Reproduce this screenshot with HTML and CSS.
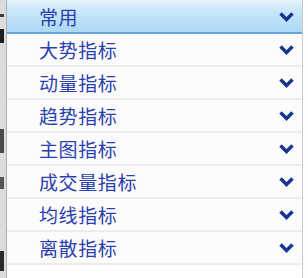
FILE: index.html
```html
<!DOCTYPE html>
<html lang="zh-CN">
<head>
    <meta charset="UTF-8">
    <title>指标菜单</title>
    <link rel="stylesheet" href="styles.css">
</head>
<body>
    <div class="screen">
        <div class="side-strip">
            <div class="mark mark-a"></div>
            <div class="mark mark-b"></div>
            <div class="mark mark-c"></div>
            <div class="mark mark-d"></div>
            <div class="mark mark-e"></div>
        </div>

        <div class="menu">
            <div class="menu-row menu-head">
                <span class="label">常用</span>
                <svg class="chev" width="15" height="11" viewBox="0 0 15 11"><path d="M1.5 2.5 L7.5 8.5 L13.5 2.5" /></svg>
            </div>
            <div class="menu-row">
                <span class="label">大势指标</span>
                <svg class="chev" width="15" height="11" viewBox="0 0 15 11"><path d="M1.5 2.5 L7.5 8.5 L13.5 2.5" /></svg>
            </div>
            <div class="menu-row">
                <span class="label">动量指标</span>
                <svg class="chev" width="15" height="11" viewBox="0 0 15 11"><path d="M1.5 2.5 L7.5 8.5 L13.5 2.5" /></svg>
            </div>
            <div class="menu-row">
                <span class="label">趋势指标</span>
                <svg class="chev" width="15" height="11" viewBox="0 0 15 11"><path d="M1.5 2.5 L7.5 8.5 L13.5 2.5" /></svg>
            </div>
            <div class="menu-row">
                <span class="label">主图指标</span>
                <svg class="chev" width="15" height="11" viewBox="0 0 15 11"><path d="M1.5 2.5 L7.5 8.5 L13.5 2.5" /></svg>
            </div>
            <div class="menu-row">
                <span class="label">成交量指标</span>
                <svg class="chev" width="15" height="11" viewBox="0 0 15 11"><path d="M1.5 2.5 L7.5 8.5 L13.5 2.5" /></svg>
            </div>
            <div class="menu-row">
                <span class="label">均线指标</span>
                <svg class="chev" width="15" height="11" viewBox="0 0 15 11"><path d="M1.5 2.5 L7.5 8.5 L13.5 2.5" /></svg>
            </div>
            <div class="menu-row">
                <span class="label">离散指标</span>
                <svg class="chev" width="15" height="11" viewBox="0 0 15 11"><path d="M1.5 2.5 L7.5 8.5 L13.5 2.5" /></svg>
            </div>
        </div>

        <div class="right-gap"></div>
    </div>
</body>
</html>
```

FILE: styles.css
```css
body {
    margin: 0;
    background-color: #ffffff;
    font-family: "Noto Sans CJK SC", "Microsoft YaHei", sans-serif;
}

.screen {
    display: flex;
    width: 308px;
    height: 278px;
    overflow: hidden;
}

/* window behind the menu, only a sliver shows */
.side-strip {
    width: 6px;
    flex-shrink: 0;
    background-color: #dcdcdc;
    border-right: 1px solid #b0b0b0;
    display: flex;
    flex-direction: column;
}

.mark {
    width: 4px;
    background-color: #3a3a3a;
}

.mark-a { height: 3px; margin-top: 14px; }
.mark-b { height: 14px; margin-top: 12px; background-color: #1e1e1e; }
.mark-c { height: 24px; margin-top: 86px; background-color: #4a4a4a; }
.mark-d { height: 12px; margin-top: 24px; background-color: #555555; }
.mark-e { height: 20px; margin-top: 62px; background-color: #2a2a2a; }

.menu {
    width: 295px;
    flex-shrink: 0;
    border-right: 1px solid #c9c9c9;
    background-color: #ffffff;
}

.menu-row {
    display: flex;
    align-items: center;
    justify-content: space-between;
    height: 31px;
    padding: 0 8px 0 32px;
    background-color: #fbfbfb;
    border-bottom: 2px solid #ececec;
}

.menu-head {
    height: 32px;
    background: linear-gradient(to bottom, #eaf5fd 0%, #d4ebfa 18%, #bfe2f8 55%, #acd8f4 100%);
    border-bottom: 2px solid #69a6dc;
}

.label {
    font-size: 19px;
    letter-spacing: 0.6px;
    color: #2b3fae;
    line-height: 1;
}

.chev {
    flex-shrink: 0;
}

.chev path {
    fill: none;
    stroke: #16358f;
    stroke-width: 3.4;
    stroke-linecap: butt;
    stroke-linejoin: miter;
}

.right-gap {
    flex: 1;
    background-color: #fdfdfd;
}
```
